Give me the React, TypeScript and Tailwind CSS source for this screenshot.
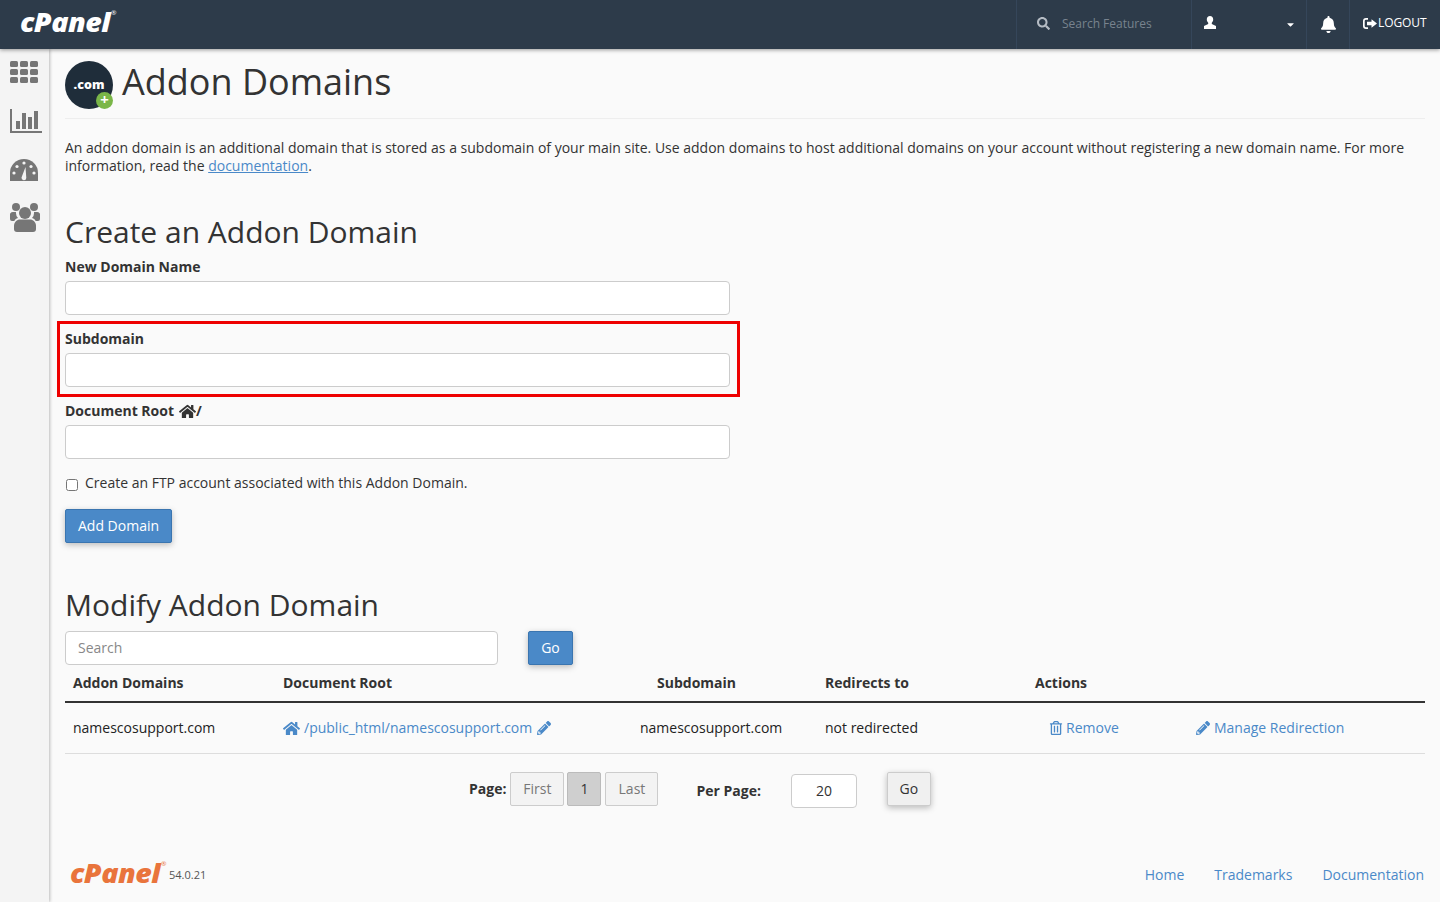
import { FaBell, FaCaretDown, FaHome, FaPencilAlt, FaRegTrashAlt, FaSearch } from "react-icons/fa";

const font = { fontFamily: '"Open Sans", "Liberation Sans", sans-serif' };

const inputCls = "block w-[665px] h-[34px] bg-white border border-[#ccc] rounded-[4px]";
const labelCls = "block text-[14px] leading-[20px] font-bold text-[#333] mb-[4px]";
const linkCls = "text-[#4a89c8]";

const CpanelLogo = ({ className }: { className: string }) => (
  <span className={`flex items-start italic font-extrabold tracking-[-0.5px] leading-none origin-left scale-x-[1.1] ${className}`}>
    cPanel<span className="text-[6px] not-italic font-normal ml-[1px] mt-[1px] tracking-normal">®</span>
  </span>
);

const GridIcon = () => (
  <svg width="28" height="22" viewBox="0 0 28 22" fill="#767676">
    {[0, 8, 16].map((y) =>
      [0, 10, 20].map((x) => <rect key={`${x}-${y}`} x={x} y={y} width="8" height="6" rx="1.5" />)
    )}
  </svg>
);

const StatsIcon = () => (
  <svg width="32" height="24" viewBox="0 0 32 24" fill="#767676">
    <path d="M0 0h2v22h30v2H0z" />
    <rect x="6" y="12" width="4" height="8" />
    <rect x="12" y="4" width="4" height="16" />
    <rect x="18" y="8" width="4" height="12" />
    <rect x="24" y="2" width="4" height="18" />
  </svg>
);

const GaugeIcon = () => (
  <svg width="28" height="22" viewBox="0 0 28 22">
    <path d="M0 22v-8a14 14 0 0 1 28 0v8z" fill="#767676" />
    <circle cx="7" cy="7.500" r="1.600" fill="#f4f4f4" />
    <circle cx="14" cy="4" r="1.600" fill="#f4f4f4" />
    <circle cx="21" cy="7.500" r="1.600" fill="#f4f4f4" />
    <circle cx="4" cy="14" r="1.600" fill="#f4f4f4" />
    <circle cx="24" cy="14" r="1.600" fill="#f4f4f4" />
    <path d="M11.500 18.500L15.500 8l.8 11a2.400 2.400 0 0 1-4.800-.5z" fill="#f4f4f4" />
  </svg>
);

const UsersIcon = () => (
  <svg width="30" height="29" viewBox="0 0 30 29" fill="#767676">
    <circle cx="6" cy="4" r="4" />
    <circle cx="24" cy="4" r="4" />
    <path d="M0 13a3 3 0 0 1 3-4h3a7.500 7.500 0 0 0 2 6c-2 .6-3.200 1.800-3.600 3H2a2 2 0 0 1-2-2z" />
    <path d="M30 13a3 3 0 0 0-3-4h-3a7.500 7.500 0 0 1-2 6c2 .6 3.200 1.800 3.600 3H28a2 2 0 0 0 2-2z" />
    <circle cx="15" cy="10" r="6" />
    <path d="M4 23c0-4 3-6.500 6-6.500h10c3 0 6 2.500 6 6.500v3a3 3 0 0 1-3 3H7a3 3 0 0 1-3-3z" />
  </svg>
);

const UserIcon = () => (
  <svg width="12" height="13" viewBox="0 0 12 13" fill="white">
    <path d="M6 0c2 0 3.200 1.500 3.200 3.500 0 1.300-.6 2.500-1.400 3.200v1.300L12 10v3H0v-3l4.200-2V6.700C3.400 6 2.800 4.800 2.800 3.500 2.800 1.500 4 0 6 0z" />
  </svg>
);

const LogoutIcon = () => (
  <svg width="14" height="11" viewBox="0 0 14 11" fill="white">
    <path d="M5 0H3a3 3 0 0 0-3 3v5a3 3 0 0 0 3 3h2V9.300H3A1.300 1.300 0 0 1 1.700 8V3A1.300 1.300 0 0 1 3 1.700h2z" />
    <path d="M4 3.800h4.500V1.300L14 5.500 8.500 9.700V7.200H4z" />
  </svg>
);

const Header = () => (
  <header className="relative z-20 flex items-stretch h-[49px] shrink-0 bg-[#2d3b4a] shadow-[0_1px_4px_rgba(0,0,0,0.4)]">
    <div className="flex-1 pl-[20px] pt-[9px]">
      <CpanelLogo className="text-white text-[26px]" />
    </div>
    <div className="flex items-center w-[175px] border-l border-[#35465a] pl-[20px] pb-[2px]">
      <FaSearch className="text-[#b5bcc4] text-[13px]" />
      <span className="ml-[12px] text-[12px] text-[#78838e]">Search Features</span>
    </div>
    <div className="flex items-center justify-between w-[115px] border-l border-[#35465a] pl-[12px] pr-[10px] pb-[4px]">
      <UserIcon />
      <FaCaretDown className="text-white text-[11px] mt-[4px]" />
    </div>
    <div className="flex items-center justify-center w-[43px] border-l border-[#35465a]">
      <FaBell className="text-white text-[17px]" />
    </div>
    <div className="flex items-center w-[91px] border-l border-[#35465a] pl-[13px] pb-[3px] text-white">
      <LogoutIcon />
      <span className="ml-[1px] text-[12px] tracking-[-0.1px]">LOGOUT</span>
    </div>
  </header>
);

const Sidebar = () => (
  <aside className="w-[49px] shrink-0 bg-[#f4f4f4] shadow-[1px_0_3px_rgba(0,0,0,0.25)] flex flex-col items-start pl-[10px]">
    <div className="mt-[12px]"><GridIcon /></div>
    <div className="mt-[26px]"><StatsIcon /></div>
    <div className="mt-[26px]"><GaugeIcon /></div>
    <div className="mt-[22px]"><UsersIcon /></div>
  </aside>
);

const DomainIcon = () => (
  <div className="relative w-[48px] h-[48px] rounded-full bg-[#1f2d3a] flex items-center justify-center">
    <span className="text-white text-[12.500px] font-extrabold">.com</span>
    <span className="absolute right-0 bottom-0 w-[17px] h-[17px] rounded-full bg-[#7ab648] text-white text-[15px] leading-[15px] font-bold text-center">+</span>
  </div>
);

const Pager = () => (
  <div className="flex items-start pl-[404px] mt-[18px]">
    <span className="text-[14px] font-bold text-[#333] mt-[6px]">Page:</span>
    <span className="ml-[4px] w-[54px] h-[34px] flex items-center justify-center border border-[#ccc] rounded-[2px] bg-[#f3f3f3] text-[14px] text-[#777]">First</span>
    <span className="ml-[3px] w-[34px] h-[34px] flex items-center justify-center border border-[#bbb] rounded-[2px] bg-[#cfcfcf] text-[14px] text-[#333]">1</span>
    <span className="ml-[4px] w-[53px] h-[34px] flex items-center justify-center border border-[#ccc] rounded-[2px] bg-[#f3f3f3] text-[14px] text-[#777]">Last</span>
    <span className="ml-[38px] text-[14px] font-bold text-[#333] mt-[8px]">Per Page:</span>
    <span className="ml-[30px] mt-[2px] w-[66px] h-[34px] flex items-center justify-center border border-[#ccc] rounded-[4px] bg-white text-[14px] text-[#333]">20</span>
    <span className="ml-[30px] w-[44px] h-[34px] flex items-center justify-center border border-[#ccc] rounded-[2px] bg-[#f0f0f0] text-[14px] text-[#333] shadow-[0_2px_6px_rgba(0,0,0,0.25)]">Go</span>
  </div>
);

export default function App() {
  return (
    <div className="flex flex-col h-screen overflow-hidden bg-[#fafafa] text-[#333]" style={font}>
      <Header />
      <div className="flex flex-1 min-h-0">
        <Sidebar />
        <main className="flex-1 pl-[16px] pr-[15px]">
          <div className="flex items-start gap-[9px] pt-[12px] pb-[9px] border-b border-[#eee]">
            <DomainIcon />
            <h1 className="text-[36px] leading-[42px] font-normal text-[#333]">Addon Domains</h1>
          </div>

          <p className="mt-[20px] text-[14px] leading-[18px] text-[#333]">
            An addon domain is an additional domain that is stored as a subdomain of your main site. Use addon domains to host additional domains on your account without registering a new domain name. For more information, read the{" "}
            <a className="text-[#4a89c8] underline">documentation</a>.
          </p>

          <h2 className="mt-[39px] text-[30px] leading-[36px] font-normal text-[#333]">Create an Addon Domain</h2>
          <div className="mt-[7px]">
            <label className={labelCls}>New Domain Name</label>
            <div className={inputCls} />
          </div>
          <div className="mt-[6px] ml-[-8px] w-[683px] h-[76px] border-[3px] border-[#ee0000] pl-[5px] pt-[5px]">
            <label className={labelCls}>Subdomain</label>
            <div className={inputCls} />
          </div>
          <div className="mt-[4px]">
            <label className={`${labelCls} flex items-center`}>
              Document Root <FaHome className="ml-[5px] text-[17px] text-[#333]" />/
            </label>
            <div className={inputCls} />
          </div>
          <label className="flex items-center mt-[14px] text-[14px] leading-[20px] text-[#333]">
            <input type="checkbox" className="ml-[1px] mt-[3px] w-[12px] h-[12px]" />
            <span className="ml-[7px]">Create an FTP account associated with this Addon Domain.</span>
          </label>
          <button className="mt-[16px] block w-[107px] h-[34px] pb-[2px] bg-[#4a89c8] border border-[#3a75b0] rounded-[2px] text-white text-[14px] shadow-[0_2px_6px_rgba(0,0,0,0.25)]">
            Add Domain
          </button>

          <h2 className="mt-[44px] text-[30px] leading-[36px] font-normal text-[#333]">Modify Addon Domain</h2>
          <div className="flex mt-[8px]">
            <div className="w-[433px] h-[34px] flex items-center pl-[12px] pb-[2px] bg-white border border-[#ccc] rounded-[4px] text-[14px] text-[#888]">Search</div>
            <button className="ml-[30px] w-[45px] h-[34px] pb-[2px] bg-[#4a89c8] border border-[#3a75b0] rounded-[2px] text-white text-[14px] shadow-[0_2px_6px_rgba(0,0,0,0.25)]">Go</button>
          </div>

          <table className="mt-[1px] w-full table-fixed border-collapse text-[14px]">
            <colgroup>
              <col className="w-[210px]" />
              <col className="w-[357px]" />
              <col className="w-[185px]" />
              <col className="w-[210px]" />
              <col />
            </colgroup>
            <thead>
              <tr className="border-b-2 border-[#333] text-left">
                <th className="h-[36px] pl-[8px] pb-[2px] font-bold">Addon Domains</th>
                <th className="pl-[8px] pb-[2px] font-bold">Document Root</th>
                <th className="pl-[25px] pb-[2px] font-bold">Subdomain</th>
                <th className="pl-[8px] pb-[2px] font-bold">Redirects to</th>
                <th className="pl-[8px] pb-[2px] font-bold">Actions</th>
              </tr>
            </thead>
            <tbody>
              <tr className="border-b border-[#ddd]">
                <td className="h-[51px] pl-[8px] text-[#222]">namescosupport.com</td>
                <td className="pl-[8px] whitespace-nowrap">
                  <a className={`${linkCls} flex items-center`}>
                    <FaHome className="text-[17px] mr-[4px] mt-[2px]" />/public_html/namescosupport.com
                    <FaPencilAlt className="text-[14px] ml-[5px]" />
                  </a>
                </td>
                <td className="pl-[8px] text-[#222]">namescosupport.com</td>
                <td className="pl-[8px] text-[#222]">not redirected</td>
                <td className="pl-[22px]">
                  <div className="flex items-center">
                    <a className={`${linkCls} w-[147px] flex items-center`}>
                      <FaRegTrashAlt className="text-[14px] mr-[3px]" />Remove
                    </a>
                    <a className={`${linkCls} flex items-center`}>
                      <FaPencilAlt className="text-[14px] mr-[4px]" />Manage Redirection
                    </a>
                  </div>
                </td>
              </tr>
            </tbody>
          </table>

          <Pager />

          <footer className="flex items-center justify-between mt-[52px] pl-[5px]">
            <div className="flex items-end">
              <div className="w-[99px]">
                <CpanelLogo className="text-[#e9743c] text-[26px]" />
              </div>
              <span className="mb-[2px] text-[11px] text-[#555]">54.0.21</span>
            </div>
            <nav className="flex gap-[30px] mr-[1px] mt-[3px] text-[14px] text-[#4a89c8]">
              <a>Home</a>
              <a>Trademarks</a>
              <a>Documentation</a>
            </nav>
          </footer>
        </main>
      </div>
    </div>
  );
}
